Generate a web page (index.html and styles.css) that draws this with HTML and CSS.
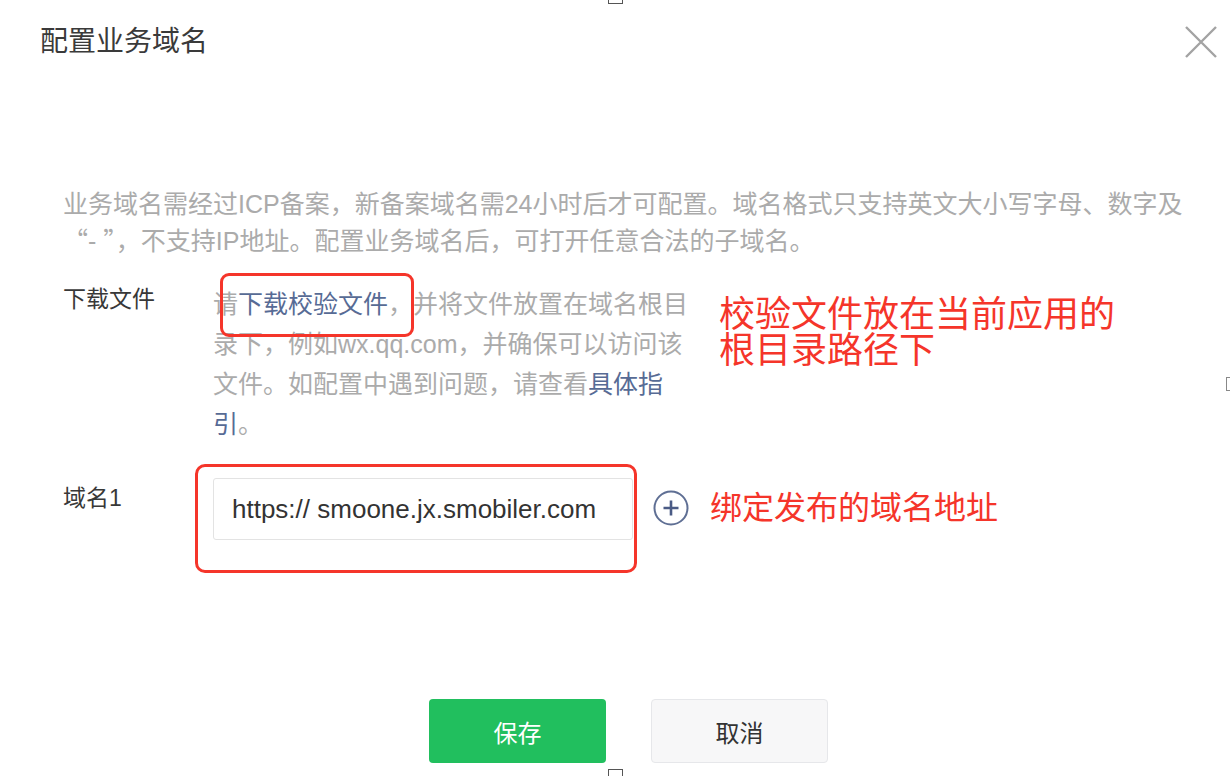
FILE: index.html
```html
<!DOCTYPE html>
<html lang="zh-CN">
<head>
  <meta charset="UTF-8" />
  <title>配置业务域名</title>
  <link rel="stylesheet" href="styles.css">
</head>
<body>
  <div class="dialog">
    <div class="header">
      <div class="title">配置业务域名</div>
      <svg class="close" width="34" height="34" viewBox="0 0 34 34">
        <path d="M2 2 L32 32 M32 2 L2 32" stroke="#a3a3a3" stroke-width="2.4" fill="none"/>
      </svg>
    </div>

    <div class="desc">业务域名需经过ICP备案，新备案域名需24小时后才可配置。域名格式只支持英文大小写字母、数字及<span class="cjk">“</span>- <span class="cjk">”</span>，不支持IP地址。配置业务域名后，可打开任意合法的子域名。</div>

    <div class="row row-file">
      <div class="label">下载文件</div>
      <div class="tip">
        请<a class="link">下载校验文件</a>，并将文件放置在域名根目录下，例如wx.qq.com，并确保可以访问该文件。如配置中遇到问题，请查看<a class="link">具体指引</a>。
        <div class="mark mark-file"></div>
      </div>
      <div class="note note-file">校验文件放在当前应用的<br>根目录路径下</div>
    </div>

    <div class="row row-domain">
      <div class="label">域名1</div>
      <div class="field">
        <div class="input">https:// smoone.jx.smobiler.com</div>
        <div class="mark mark-domain"></div>
      </div>
      <svg class="add" width="36" height="36" viewBox="0 0 36 36">
        <circle cx="18" cy="18" r="16.5" stroke="#5f6f94" stroke-width="2" fill="none"/>
        <path d="M18 10.5 V25.5 M10.5 18 H25.5" stroke="#4a5b85" stroke-width="2.6"/>
      </svg>
      <div class="note note-domain">绑定发布的域名地址</div>
    </div>

    <div class="footer">
      <button class="btn btn-primary">保存</button>
      <button class="btn btn-default">取消</button>
    </div>
  </div>

  <div class="handle handle-top"></div>
  <div class="handle handle-bottom"></div>
  <div class="handle handle-right"></div>
</body>
</html>
```

FILE: styles.css
```css
body {
  margin: 0;
  background: #fff;
  font-family: "Liberation Sans", "Noto Sans CJK SC", sans-serif;
  width: 1230px;
  height: 776px;
  overflow: hidden;
  position: relative;
}
.dialog {
  width: 1230px;
}
.header {
  display: flex;
  justify-content: space-between;
  align-items: center;
  padding: 22px 12px 0 40px;
  height: 40px;
}
.title {
  font-size: 28px;
  line-height: 40px;
  color: #3a3a3a;
}
.close {
  margin-top: -1px;
}
.desc {
  margin-top: 124px;
  margin-left: 63px;
  width: 1125px;
  font-size: 25px;
  line-height: 37px;
  color: #ababab;
}
.cjk {
  font-family: "Noto Sans CJK SC", sans-serif;
  line-height: 0;
}
.row {
  display: flex;
  align-items: flex-start;
  padding-left: 63px;
}
.label {
  width: 150px;
  flex: none;
  font-size: 23px;
  color: #383838;
}
.row-file {
  margin-top: 24px;
}
.row-file .label {
  line-height: 30px;
}
.tip {
  position: relative;
  width: 480px;
  flex: none;
  font-size: 25px;
  line-height: 40px;
  color: #ababab;
}
.link {
  color: #576b95;
}
.mark {
  position: absolute;
  border: 3px solid #f5352a;
  border-radius: 9px;
}
.mark-file {
  left: 7px;
  top: -11px;
  width: 188px;
  height: 58px;
}
.note {
  color: #f5352a;
}
.note-file {
  margin-left: 26px;
  margin-top: 13px;
  font-size: 36px;
  line-height: 36px;
}
.row-domain {
  margin-top: 34px;
  align-items: center;
}
.row-domain .label {
  line-height: 40px;
  align-self: flex-start;
}
.field {
  position: relative;
}
.input {
  width: 400px;
  height: 60px;
  padding-left: 18px;
  border: 1px solid #e3e3e3;
  border-radius: 3px;
  font-size: 26px;
  line-height: 60px;
  color: #333;
}
.mark-domain {
  left: -18px;
  top: -14px;
  width: 436px;
  height: 103px;
  border-radius: 10px;
}
.add {
  margin-left: 20px;
  margin-top: -2px;
}
.note-domain {
  margin-left: 21px;
  margin-top: -2px;
  font-size: 32px;
  line-height: 40px;
}
.footer {
  display: flex;
  justify-content: center;
  gap: 45px;
  margin-top: 159px;
  padding-left: 27px;
}
.btn {
  width: 177px;
  height: 64px;
  border-radius: 4px;
  font-family: "Noto Sans CJK SC", sans-serif;
  font-size: 24px;
}
.btn-primary {
  background: #21bf5e;
  border: none;
  color: #fff;
}
.btn-default {
  background: #f7f7f8;
  border: 1px solid #e6e7ea;
  color: #333;
}
.handle {
  position: absolute;
  background: #fff;
  border: 1px solid #555;
}
.handle-top {
  left: 608px;
  top: -10px;
  width: 13px;
  height: 12px;
}
.handle-bottom {
  left: 608px;
  top: 769px;
  width: 13px;
  height: 12px;
}
.handle-right {
  left: 1226px;
  top: 377px;
  width: 8px;
  height: 12px;
  border-color: #888;
}
```
